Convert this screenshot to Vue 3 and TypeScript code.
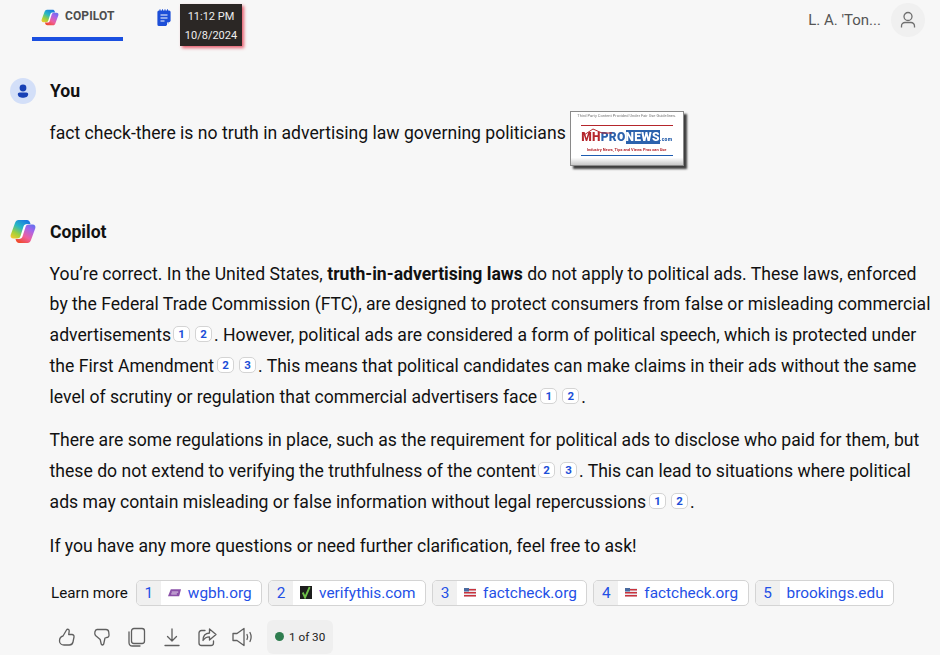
<script setup lang="ts">
interface Source {
  id: number;
  name: string;
  icon?: 'wgbh' | 'check' | 'flag';
}

const sources: Source[] = [
  { id: 1, name: 'wgbh.org', icon: 'wgbh' },
  { id: 2, name: 'verifythis.com', icon: 'check' },
  { id: 3, name: 'factcheck.org', icon: 'flag' },
  { id: 4, name: 'factcheck.org', icon: 'flag' },
  { id: 5, name: 'brookings.edu' }
];
</script>

<template>
  <div class="page">
    <svg class="defs" width="0" height="0" aria-hidden="true">
      <defs>
        <linearGradient id="cp-left" x1=".75" y1="0" x2=".1" y2="1">
          <stop offset="0" stop-color="#1a78e2" />
          <stop offset=".4" stop-color="#27b8c4" />
          <stop offset=".72" stop-color="#9fd03c" />
          <stop offset="1" stop-color="#f6c92c" />
        </linearGradient>
        <linearGradient id="cp-right" x1=".75" y1="0" x2=".1" y2="1">
          <stop offset="0" stop-color="#f04a2c" />
          <stop offset=".35" stop-color="#ee5f9e" />
          <stop offset=".72" stop-color="#a565ea" />
          <stop offset="1" stop-color="#5f70ee" />
        </linearGradient>
        <g id="copilot-mark">
          <path d="M13 6h3.500l-3 13H10z" fill="#fff" />
          <path d="M8.500 1H17c1.500 0 2.500 1 3 2.500l.5 1.500H17c-2 0-3 1-3.500 2.500l-3 9.500C10 18.700 9 19.500 7 19.500H3.500C1 19.500 0 17.500.8 15.500L5 4C5.700 2 6.800 1 8.500 1z" fill="url(#cp-left)" />
          <path d="M8.500 1H17c1.500 0 2.500 1 3 2.500l.5 1.500H17c-2 0-3 1-3.500 2.500l-3 9.500C10 18.700 9 19.500 7 19.500H3.500C1 19.500 0 17.500.8 15.500L5 4C5.700 2 6.800 1 8.500 1z" fill="url(#cp-right)" transform="rotate(180 13 12.500)" />
        </g>
      </defs>
    </svg>

    <header class="topbar">
      <nav class="tabs">
        <div class="tab active">
          <svg class="logo-small" viewBox="0 0 26 25">
            <use href="#copilot-mark" />
          </svg>
          <span>COPILOT</span>
        </div>
        <div class="tab notebook">
          <svg width="14" height="18" viewBox="0 0 14 18">
            <path d="M2 1.500h10a1.600 1.600 0 0 1 1.600 1.600V12l-4.600 5H2A1.600 1.600 0 0 1 .4 15.400V3.100A1.600 1.600 0 0 1 2 1.500z" fill="#1d4fd8" />
            <path d="M3 .3v2M5.500.3v2M8 .3v2M10.500.3v2" stroke="#1d4fd8" stroke-width="1" />
            <path d="M3.500 6h7M3.500 9h7M3.500 12h4" stroke="#fff" stroke-width="1.200" />
            <path d="M10 13.500h3v.8h-2.200V17H10z" fill="#fff" />
          </svg>
        </div>
      </nav>
      <div class="stamp">
        <div>11:12 PM</div>
        <div>10/8/2024</div>
      </div>
      <div class="account">
        <span class="account-name">L. A. 'Ton...</span>
        <span class="account-avatar">
          <svg width="18" height="18" viewBox="0 0 18 18" fill="none" stroke="#6f6f6f" stroke-width="1.300">
            <circle cx="9" cy="5.500" r="4" />
            <path d="M2.500 16.500v-1.500A3.500 3.500 0 0 1 6 11.500h6a3.500 3.500 0 0 1 3.500 3.500v1.500" />
          </svg>
        </span>
      </div>
    </header>

    <section class="turn user-turn">
      <div class="turn-head">
        <span class="you-avatar">
          <svg width="14" height="14" viewBox="0 0 14 14">
            <circle cx="7" cy="4" r="3.400" fill="#1740b5" />
            <path d="M1.800 10.300c0-1 .8-1.800 1.800-1.800h6.800c1 0 1.800.8 1.800 1.800 0 2.400-2.600 3.500-5.200 3.500s-5.200-1.100-5.200-3.500z" fill="#1740b5" />
          </svg>
        </span>
        <strong>You</strong>
      </div>
      <div class="question">
        <span>fact check-there is no truth in advertising law governing politicians</span>
        <div class="thumb">
          <div class="thumb-note">Third Party Content Provided Under Fair Use Guidelines.</div>
          <div class="thumb-rule red"></div>
          <svg class="thumb-roof" width="30" height="8" viewBox="0 0 30 8">
            <path d="M1 7L10 1l9 4h10" fill="none" stroke="#b5262c" stroke-width="1" />
          </svg>
          <div class="thumb-brand"><span class="mh">MH</span><span class="pro">PRO</span><span class="news">NEWS</span><span class="com">.com</span></div>
          <div class="thumb-tag">Industry News, Tips and Views Pros can Use</div>
          <div class="thumb-rule blue"></div>
        </div>
      </div>
    </section>

    <section class="turn bot-turn">
      <div class="turn-head">
        <svg class="logo-large" viewBox="0 0 26 25">
          <use href="#copilot-mark" />
        </svg>
        <strong>Copilot</strong>
      </div>
      <div class="answer">
        <p>You’re correct. In the United States, <strong>truth-in-advertising laws</strong> do not apply to political ads. These laws, enforced by the Federal Trade Commission (FTC), are designed to protect consumers from false or misleading commercial advertisements<sup>1</sup><sup>2</sup>. However, political ads are considered a form of political speech, which is protected under the First Amendment<sup>2</sup><sup>3</sup>. This means that political candidates can make claims in their ads without the same level of scrutiny or regulation that commercial advertisers face<sup>1</sup><sup>2</sup>.</p>
        <p>There are some regulations in place, such as the requirement for political ads to disclose who paid for them, but these do not extend to verifying the truthfulness of the content<sup>2</sup><sup>3</sup>. This can lead to situations where political ads may contain misleading or false information without legal repercussions<sup>1</sup><sup>2</sup>.</p>
        <p>If you have any more questions or need further clarification, feel free to ask!</p>
      </div>

      <div class="learn">
        <span class="learn-label">Learn more</span>
        <a v-for="s in sources" :key="s.id" class="source">
          <span class="source-num">{{ s.id }}</span>
          <span class="source-body">
            <svg v-if="s.icon === 'wgbh'" width="13" height="8" viewBox="0 0 14 8">
              <path d="M3 0h11l-2 7.500H0z" fill="#8a4fa8" />
              <path d="M4 3h7M3.500 5h6" stroke="#e9dcf0" stroke-width="1" />
            </svg>
            <svg v-else-if="s.icon === 'check'" width="12" height="13" viewBox="0 0 13 13" preserveAspectRatio="none">
              <rect width="13" height="13" fill="#1d1d1d" />
              <path d="M3 6.500l2.500 5L10.500 1" fill="none" stroke="#6fc04a" stroke-width="2" />
            </svg>
            <svg v-else-if="s.icon === 'flag'" width="12" height="9" viewBox="0 0 12 9">
              <rect width="12" height="9" fill="#e8e8ee" />
              <rect x="5" y="1" width="7" height="1.500" fill="#c8333c" />
              <rect y="4" width="12" height="1.500" fill="#c8333c" />
              <rect y="7" width="12" height="1.500" fill="#c8333c" />
              <rect width="5" height="3.500" fill="#4a6a9f" />
            </svg>
            <span>{{ s.name }}</span>
          </span>
        </a>
      </div>

      <div class="actions">
        <svg width="20" height="20" viewBox="0 0 20 20"><path d="M6 9l3.500-6c1-1.500 3-.5 2.700 1.200L11.700 7.500h3.300c1.300 0 2.300 1.200 2 2.500l-1 5c-.4 1.800-1.800 3-3.700 3H7c-2.500 0-4.500-1.800-4.500-4 0-2.500 1.500-4.500 3.500-5z" /></svg>
        <svg width="20" height="20" viewBox="0 0 20 20"><path d="M5 2.500h9c1.500 0 2.500 1 2.700 2.300l.3 3c.2 1.500-.8 2.700-2.500 2.700l-1.500.5-1.300 6c-.3 1.300-2.200 1.300-2.500 0l-1-4.500L3.500 8.500C2 6.500 3 2.500 5 2.500z" /></svg>
        <svg width="20" height="20" viewBox="0 0 20 20"><rect x="4.500" y="1.500" width="13" height="15" rx="2.500" /><path d="M2 5v10.500c0 2 1.500 3.500 3.500 3.500H13" /></svg>
        <svg width="20" height="20" viewBox="0 0 20 20"><path d="M10 2v12M5.500 9.500L10 14l4.500-4.500M3 18.500h14" /></svg>
        <svg width="20" height="20" viewBox="0 0 20 20"><path d="M8 3.500H4.500C3 3.500 2 4.500 2 6v10c0 1.500 1 2.500 2.500 2.500H14c1.500 0 2.500-1 2.500-2.500v-2" /><path d="M12.500 2l6.500 5.500-6.500 5.500V9.800c-3 0-5 1.200-6.500 3.700 0-4.500 2.500-7.300 6.500-7.500z" /></svg>
        <svg width="22" height="20" viewBox="0 0 22 20"><path d="M1 6.500h4L12 1.500v17L5 13.500H1z" /><path d="M15 7.500c.8 1.500.8 3.500 0 5M18 5.500c1.400 2.800 1.400 6.200 0 9" /></svg>
        <div class="counter"><i class="dot"></i>1 of 30</div>
      </div>
    </section>
  </div>
</template>

<style>
html,
body {
  margin: 0;
  background: #f7f7f7;
  overflow: hidden;
}
</style>

<style scoped>
.page {
  position: relative;
  width: 940px;
  height: 655px;
  overflow: hidden;
  background: #f7f7f7;
  font-family: Roboto, "Liberation Sans", sans-serif;
  color: #111;
}

.topbar {
  display: flex;
  justify-content: space-between;
  align-items: flex-start;
  height: 77px;
}

.defs {
  position: absolute;
}

.tabs {
  display: flex;
  margin-left: 32px;
}

.tab {
  display: flex;
  align-items: center;
  box-sizing: border-box;
  font-size: 12px;
  font-weight: 700;
  color: #4d4d4d;
  letter-spacing: 0.1px;
}

.tab.active {
  width: 91px;
  height: 41px;
  padding: 0 0 6px 9px;
  gap: 6px;
  border-bottom: 4px solid #1a4fe0;
}

.logo-small {
  width: 18px;
  height: 17px;
  margin-top: 4px;
}

.notebook {
  margin: 8px 0 0 34px;
  height: 20px;
  padding: 0;
}

.stamp {
  position: absolute;
  left: 180px;
  top: 4px;
  width: 62px;
  height: 42px;
  background: #2b2725;
  color: #eee;
  font-size: 11px;
  line-height: 18.500px;
  text-align: center;
  padding-top: 4px;
  box-sizing: border-box;
  box-shadow: 2px 2px 3px rgba(228, 58, 78, 0.8);
}

.account {
  display: flex;
  align-items: center;
  gap: 10px;
  margin: 3px 15px 0 0;
  font-size: 15px;
  color: #555;
}

.account-avatar {
  display: flex;
  align-items: center;
  justify-content: center;
  width: 34px;
  height: 34px;
  border-radius: 50%;
  background: #f0f0f0;
}

.turn-head {
  display: flex;
  align-items: center;
  gap: 14px;
  height: 27px;
  padding-left: 10px;
  font-size: 17.600px;
}

.you-avatar {
  display: flex;
  align-items: center;
  justify-content: center;
  width: 26px;
  height: 26px;
  border-radius: 50%;
  background: #d3dff8;
}

.logo-large {
  width: 26px;
  height: 25px;
}

.question {
  display: flex;
  align-items: flex-start;
  height: 107px;
  margin-top: 7px;
  padding-left: 49.600px;
  font-size: 17.600px;
}

.question > span {
  margin-top: 9px;
  line-height: 26px;
}

.thumb {
  position: relative;
  width: 112px;
  height: 53px;
  margin-left: 4px;
  border: 1px solid #8a8a8a;
  background: linear-gradient(#fff 86%, #c8c8c8);
  box-shadow: 3px 3px 2px #3f3f3f;
  text-align: center;
  overflow: hidden;
  filter: blur(0.35px);
}

.thumb-note {
  font-size: 4px;
  line-height: 7px;
  color: #777;
  white-space: nowrap;
}

.thumb-rule {
  height: 1px;
  margin: 6px 10px 0;
}

.thumb-rule.red {
  background: #b5262c;
}

.thumb-rule.blue {
  margin-top: 2px;
  background: #1d5bb0;
}

.thumb-roof {
  position: absolute;
  left: 12px;
  top: 16px;
}

.thumb-brand {
  font-size: 12px;
  line-height: 13px;
  font-weight: 900;
  letter-spacing: 0.3px;
  margin-top: 5px;
  white-space: nowrap;
}

.mh {
  color: #b5262c;
}

.pro {
  color: #2b62ad;
}

.news {
  background: #2b62ad;
  color: #fff;
}

.com {
  color: #2b62ad;
  font-size: 5px;
}

.thumb-tag {
  font-size: 4px;
  line-height: 7px;
  font-weight: 700;
  color: #b5262c;
  white-space: nowrap;
}

.answer {
  margin-top: 13.500px;
  padding: 0 8px 0 49.600px;
  font-size: 17.600px;
  line-height: 30.800px;
  color: #111;
}

.answer p {
  margin: 0 0 13px;
}

.answer strong {
  font-weight: 700;
}

sup {
  display: inline-block;
  width: 17px;
  height: 16px;
  margin: 0 2px;
  border: 1px solid #d4d4d4;
  border-radius: 5px;
  background: #fff;
  box-sizing: border-box;
  color: #1d4fd8;
  font-size: 11.500px;
  font-weight: 700;
  line-height: 14px;
  text-align: center;
  vertical-align: 3px;
}

sup + sup {
  margin-left: 3px;
}

.learn {
  display: flex;
  align-items: center;
  gap: 6px;
  margin-top: 18px;
  padding-left: 51px;
  height: 26px;
}

.learn-label {
  margin-right: 2px;
  font-size: 15.200px;
}

.source {
  display: flex;
  height: 26px;
  border: 1px solid #d4d4d4;
  border-radius: 5px;
  background: #fff;
  box-sizing: border-box;
  overflow: hidden;
  color: #2450e6;
  font-size: 15.360px;
  line-height: 24px;
}

.source-num {
  width: 24px;
  text-align: center;
  background: #f0f0f0;
}

.source-body {
  display: flex;
  align-items: center;
  gap: 7px;
  padding: 0 9.500px 0 7px;
}

.actions {
  display: flex;
  align-items: center;
  gap: 15px;
  height: 34px;
  margin-top: 14px;
  padding-left: 57px;
}

.actions svg {
  fill: none;
  stroke: #5f5f5f;
  stroke-width: 1.300;
  stroke-linejoin: round;
  stroke-linecap: round;
}

.counter {
  display: flex;
  align-items: center;
  gap: 5px;
  height: 34px;
  margin-left: -2px;
  padding: 0 8px;
  border-radius: 6px;
  background: #efefef;
  font-size: 11.700px;
  color: #222;
}

.dot {
  width: 9px;
  height: 9px;
  border-radius: 50%;
  background: #2e7d4f;
}
</style>
